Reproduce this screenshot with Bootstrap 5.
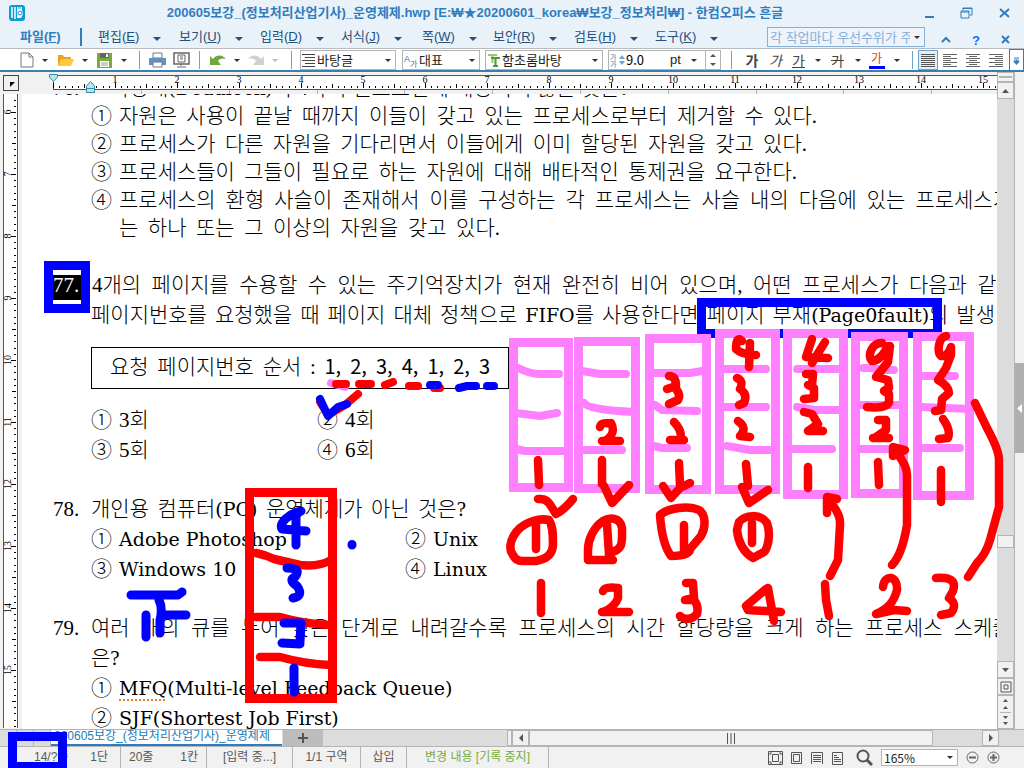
<!DOCTYPE html>
<html lang="ko">
<head>
<meta charset="utf-8">
<meta name="viewport" content="width=device-width, initial-scale=1">
<title>200605보강_(정보처리산업기사)_운영제제.hwp - 한컴오피스 흔글</title>
<link rel="stylesheet" href="https://cdn.jsdelivr.net/npm/bootstrap@5.3.0/dist/css/bootstrap.min.css">
<style>
:root{--blue:#2f7dc0;--line:#b4b4b4;--face:#f1f1f1;--track:#dcdcdc;--ink:#595959}
body{font-family:"Liberation Sans","Noto Sans CJK KR",sans-serif;font-size:13px;line-height:16px;color:#222;background:#eaf2f9;overflow:hidden}
button{border:0;background:none;padding:0;color:inherit;line-height:inherit}
svg{display:block;flex:none}
.caret{display:inline-block;border:4px solid transparent;border-top-color:#24507c;border-bottom:0}
.caret.dk{border-width:3px;border-bottom:0;border-top-color:#333}
.caret.lt{border-width:3px;border-bottom:0;border-top-color:#bbb}
.titlebar{height:25px}
.apptitle{font-size:13px;font-weight:700;color:var(--blue)}
.menubar{height:23px;color:#24507c}
.menubar button{width:81px;flex:none;text-align:left}
.menubar .filebtn{width:60px;color:var(--blue);font-weight:700}
.menubar .slim{width:71px}
.menubar .caret{margin-left:10px}
.filesep{width:2px;height:18px;background:var(--blue);margin-right:16px;flex:none}
.picker{appearance:none;border:1px solid var(--line);border-radius:0;background:#fff;color:#222;font:13px/16px "Noto Sans CJK KR",sans-serif;padding:0 14px 0 16px;height:20px;width:100%}
.pickwrap{position:relative}
.pickwrap>svg{position:absolute;left:2px;top:3px}
.pickwrap>.caret{position:absolute;right:5px;top:9px}
.quick{width:158px;margin-right:15px;flex:none}
.quick .picker{border:1px solid #84b1da;background:#eef4fa;color:#84b1da;padding-left:2px}
.tools{display:grid;grid-template-columns:20px 16px 24px 16px 23px 16px 14px 23px 24px 12px 24px 15px 24px 14px 18px 96px 6px 78px 5px 118px 5px 98px 15px 20px 22px 25px 21px 18px 21px 19px 20px 20px 11px 20px 23px 23px 23px 1fr 15px;padding-left:17px;height:24px;background:#fff;border-top:1px solid #b8bcc0;border-bottom:2px solid #3a7fae;align-items:center}
.tools>*{justify-self:center}
.tools>.wide{justify-self:stretch}
.vsep{width:1px;height:18px;background:#6fa3cf}
.ga{font:14px/18px "Noto Sans CJK KR",sans-serif;color:#444}
.sizebox{border:1px solid var(--line);height:20px}
.sizebox input{border:0;width:44px;padding:0;font:13px/16px "Noto Sans CJK KR",sans-serif}
.on{background:#e3eef8;border:1px solid #6fa3cf;width:20px;height:20px;display:grid;place-items:center}
.expander{border:1px solid var(--blue);border-bottom:0;height:22px;width:15px}
.rulerrow{height:22px;background:var(--face)}
.tabsel{width:16px;height:16px;border:1px solid #444;margin:3px 3px 0 3px}
.vruler{width:22px;background:var(--face);flex:none}
.paper{background:#fff;color:#000;padding-left:31px;font:300 21px/30px "Liberation Serif","Noto Sans CJK KR",serif;white-space:nowrap;overflow:hidden}
.first{margin-top:-20px;line-height:28px}
.quest{margin-bottom:29px}
.first.quest{margin-bottom:28px}
.qn{width:38px;flex:none}
.on77{background:#000;color:#fff;width:28px;margin:5px 11px 0 0;height:25px;line-height:20px}
.body1{padding-left:38px}
.mk{width:28px;flex:none}
.la{font-family:"DejaVu Serif",serif;font-size:19px;line-height:1}
.seq{font-family:"Noto Sans CJK KR",sans-serif;font-size:20px;font-weight:400;line-height:1}
.just{text-align:justify;text-align-last:justify;flex:none}
.j375{width:375px}.j381{width:381px}.j678{width:678px}.j688{width:688px}.j698{width:698px}.j893{width:893px}.j904{width:904px}.j940{width:940px}.j538{width:538px}
.given{border:1px solid #000;width:418px;height:42px;line-height:38px;margin:17px 0 16px;padding-left:18px;display:flex}
.given .just{width:380px}
.half{width:226px}.half2{width:314px}
.spell{text-decoration:underline dotted #e07b2a 2px;text-underline-offset:4px}
.vscroll{width:17px;background:var(--track);flex:none}
.sbtn{background:var(--face);border:1px solid var(--line);display:grid;place-items:center;flex:none}
.knob{height:17px}.midknob{height:13px;margin-top:436px}
.splitter{height:10px}.pager{height:34px}
.dock{width:10px;background:var(--face);border-left:1px solid var(--line);flex:none}
.dockgrip{height:90px;background:#b0b0b0;margin-top:291px;display:grid;place-items:center}
.tabrow{height:17px;background:var(--track);border-top:1px solid var(--line)}
.doctab{width:231px;flex:none;background:#fff;border-bottom:2px solid var(--blue);color:#1d7db8;line-height:12px;font-size:12px;overflow:hidden;white-space:nowrap;padding-left:3px;text-decoration:none;display:block}
.nib{width:17px;flex:none;border-right:1px solid var(--line);height:100%}
.addtab{width:40px;flex:none;background:#bcbcbc;display:grid;place-items:center;margin-left:1px}
.side{width:17px}.hthumb{width:404px}.hrest{width:49px}.hsplit{width:5px}
.status{height:22px;background:var(--face);border-top:1px solid var(--line);color:var(--ink);font-size:12px;line-height:20px}
.cell{border-right:1px solid var(--line);white-space:nowrap;height:100%;text-align:center}
.c1{width:121px;padding:0 12px 0 34px}.c2{width:86px}.c3{width:68px}.c4{width:46px}.c5{width:142px;color:#76ac3b}
.zoombox{width:77px}
.zoombox .picker{height:17px;padding-left:2px;font-size:12px;line-height:14px}
.zoombox>.caret{top:7px}
.ink{position:absolute;left:0;top:0;pointer-events:none;fill:none;stroke-width:9;stroke-linecap:round;stroke-linejoin:round}
.tick{font:10px "Liberation Serif",serif;fill:#000;text-anchor:middle}
</style>
</head>
<body>
<div class="vh-100 d-flex flex-column position-relative overflow-hidden">
  <header>
    <div class="titlebar d-flex align-items-center">
      <svg class="ms-2" width="18" height="18" viewBox="0 0 18 18"><rect x="1" y="1" width="16" height="16" rx="3" fill="#0d9bd7"/><path d="M4 3v11M7 3v12" stroke="#fff" stroke-width="1.5"/><path d="M9 3h5v3l1 4-2 4H9z" fill="#fff"/><circle cx="12" cy="9" r="2" fill="none" stroke="#0d9bd7"/><path d="M10 4h3" stroke="#0d9bd7"/></svg>
      <div class="apptitle flex-fill text-center">200605보강_(정보처리산업기사)_운영제제.hwp [E:₩★20200601_korea₩보강_정보처리₩] - 한컴오피스 흔글</div>
      <div class="d-flex gap-4 pe-2 me-1">
        <button aria-label="최소화"><svg width="12" height="14"><path d="M1 11h9" stroke="#2f7dc0" stroke-width="2"/></svg></button>
        <button aria-label="이전 크기로"><svg width="14" height="14" fill="none" stroke="#2f7dc0"><path d="M3 4V2h9v7h-2M3 2.500h9"/><path d="M1 5h8v7H1zM1 6h8"/></svg></button>
        <button aria-label="닫기"><svg width="14" height="14"><path d="M2 3l9 8M11 3l-9 8" stroke="#2f7dc0" stroke-width="2"/></svg></button>
      </div>
    </div>
    <nav class="menubar d-flex align-items-center">
      <button class="filebtn ms-3 ps-1">파일(<u>F</u>)</button>
      <span class="filesep ms-1"></span>
      <button>편집(<u>E</u>) <i class="caret"></i></button>
      <button>보기(<u>U</u>) <i class="caret"></i></button>
      <button>입력(<u>D</u>) <i class="caret"></i></button>
      <button>서식(<u>J</u>) <i class="caret"></i></button>
      <button class="slim">쪽(<u>W</u>) <i class="caret"></i></button>
      <button>보안(<u>R</u>) <i class="caret"></i></button>
      <button>검토(<u>H</u>) <i class="caret"></i></button>
      <button>도구(<u>K</u>) <i class="caret"></i></button>
      <div class="pickwrap quick ms-auto"><select class="picker" aria-label="찾을 기능"><option>각 작업마다 우선수위가 주</option></select><i class="caret dk"></i></div>
      <div class="d-flex gap-3 pe-2 me-1 pt-2">
        <svg width="12" height="12"><path d="M2 8l4-4 4 4" fill="none" stroke="#2f7dc0" stroke-width="2"/></svg>
        <b class="text-primary lh-1 px-1">?</b>
        <svg width="12" height="12"><path d="M2 2l7 7M9 2L2 9" stroke="#2f7dc0" stroke-width="2"/></svg>
      </div>
    </nav>
    <div class="tools" role="toolbar">
      <button aria-label="새 문서"><svg width="14" height="16"><path d="M1 1h8l4 4v10H1zM9 1v4h4" fill="#fff" stroke="#777"/></svg></button><i class="caret dk"></i>
      <button aria-label="불러오기"><svg width="17" height="14"><path d="M1 13V2h5l1 2h7v3" fill="#f0a020"/><path d="M1 13L4 6h13l-3 7z" fill="#ffc93c"/></svg></button><i class="caret dk"></i>
      <button aria-label="저장하기"><svg width="15" height="15"><path d="M0 0h15v15H0z" fill="#76ac3b"/><path d="M3 0h9v5H3z" fill="#666"/><path d="M9 1h2v3H9zM3 8h9v6H3z" fill="#fff"/><path d="M4 10h7M4 12h7" stroke="#999"/></svg></button><i class="caret dk"></i>
      <span class="vsep"></span>
      <button aria-label="인쇄"><svg width="17" height="16"><path d="M4 1h9v5H4z" fill="#fff" stroke="#777"/><path d="M0 6h17v7H0z" fill="#5e93c9"/><path d="M4 10h9v5H4z" fill="#fff" stroke="#777"/></svg></button>
      <button aria-label="미리 보기"><svg width="17" height="16" fill="none" stroke="#666"><path d="M1 1h15v11H1z" stroke-width="1.500"/><path d="M5 3h7v7H5zM7 5h3M7 7h3M4 15h9M8 12v2"/></svg></button>
      <span class="vsep"></span>
      <button aria-label="되돌리기"><svg width="17" height="13"><path d="M1 2l3 3c4-5 10-4 13 0-4-1-7 0-8 2l3 4H1z" fill="#70a83a"/></svg></button><i class="caret dk"></i>
      <button aria-label="다시 실행"><svg width="17" height="13"><path d="M16 2l-3 3C9 0 3 1 0 5c4-1 7 0 8 2l-3 4h11z" fill="#d0d0d0"/></svg></button><i class="caret lt"></i>
      <span class="vsep"></span>
      <div class="pickwrap wide"><svg width="14" height="14" stroke="#444"><path d="M0 1.500h13M3 4.500h10M0 7.500h13M3 10.500h10M0 13.500h13"/></svg><select class="picker" aria-label="스타일"><option>바탕글</option></select><i class="caret dk"></i></div><i></i>
      <div class="pickwrap wide"><svg width="14" height="15"><text x="0" y="9" font-size="9" fill="#2f7dc0">A</text><text x="6" y="14" font-size="8" fill="#2f7dc0">가</text></svg><select class="picker" aria-label="언어"><option>대표</option></select><i class="caret dk"></i></div><i></i>
      <div class="pickwrap wide"><svg width="14" height="14"><path d="M1 2h9M5.500 2v8" stroke="#9cc47a" stroke-width="2"/><path d="M4 5h9M8.500 5v8M6 13h5" stroke="#4f9a2c" stroke-width="2"/></svg><select class="picker" aria-label="글꼴"><option>함초롬바탕</option></select><i class="caret dk"></i></div><i></i>
      <div class="sizebox wide d-flex align-items-center"><svg width="17" height="16"><text x="1" y="8" font-size="7" fill="#2f7dc0">가</text><text x="1" y="15" font-size="7" fill="#2f7dc0">가</text><path d="M13 3l3 4h-6zM13 13l3-4h-6z" fill="#6aa5da"/></svg><input value="9.0" aria-label="글자 크기"><span>pt</span><i class="caret dk ms-auto me-2"></i></div>
      <button class="sizebox wide border-start-0 d-flex flex-column align-items-center justify-content-around" aria-label="크기 조절"><svg width="6" height="4"><path d="M0 3l3-3 3 3z" fill="#555"/></svg><svg width="6" height="4"><path d="M0 0l3 3 3-3z" fill="#555"/></svg></button>
      <span class="vsep"></span>
      <button class="ga fw-bold">가</button><button class="ga fst-italic">가</button><button class="ga text-decoration-underline">가</button><i class="caret dk"></i><button class="ga text-decoration-line-through">가</button><i class="caret dk"></i>
      <button aria-label="글자 색"><svg width="16" height="18"><text x="2" y="12" font-size="12" fill="#e0401c">가</text><path d="M0 15h16v3H0z" fill="#00f"/></svg></button><i class="caret dk"></i>
      <span class="vsep"></span>
      <button class="on" aria-label="양쪽 정렬"><svg width="14" height="14" stroke="#555"><path d="M0 1.500h14M0 3.500h14M0 5.500h14M0 7.500h14M0 9.500h14M0 11.500h14M0 13.500h14"/></svg></button>
      <button aria-label="왼쪽 정렬"><svg width="14" height="14" stroke="#666"><path d="M0 1.500h14M0 3.500h8M0 5.500h14M0 7.500h8M0 9.500h14M0 11.500h8M0 13.500h14"/></svg></button>
      <button aria-label="가운데 정렬"><svg width="14" height="14" stroke="#666"><path d="M0 1.500h14M3 3.500h8M0 5.500h14M3 7.500h8M0 9.500h14M3 11.500h8M0 13.500h14"/></svg></button>
      <button aria-label="오른쪽 정렬"><svg width="14" height="14" stroke="#666"><path d="M0 1.500h14M6 3.500h8M0 5.500h14M6 7.500h8M0 9.500h14M6 11.500h8M0 13.500h14"/></svg></button>
      <i></i>
      <button class="expander d-grid" aria-label="더 보기"><svg class="m-auto" width="7" height="8"><path d="M1 1h5M1 3h5M3.500 3v4" stroke="#2f7dc0"/><path d="M0 4h7L3.500 8z" fill="#2f7dc0"/></svg></button>
    </div>
  </header>

  <div class="d-flex flex-fill overflow-hidden">
    <div class="d-flex flex-column flex-fill overflow-hidden">
      <div class="rulerrow d-flex">
        <button class="tabsel" aria-label="탭 종류"><svg width="14" height="14"><path d="M6 6h5l-5 5z" fill="#000"/></svg></button>
        <svg id="hr" class="flex-fill" height="22"></svg>
      </div>
      <div class="d-flex flex-fill overflow-hidden">
        <div class="vruler"><svg id="vr" width="22" height="634"></svg></div>
        <main class="paper flex-fill">
          <div class="first quest">
            <div class="d-flex"><span class="qn">76.</span><span class="just j538">교착상태<span class="la">(Deadlock)</span>의 4가지 필요조건에 해당되지 않는 것은?</span></div>
            <div class="body1">
              <div class="d-flex"><span class="mk">①</span><span class="just j698">자원은 사용이 끝날 때까지 이들이 갖고 있는 프로세스로부터 제거할 수 있다.</span></div>
              <div class="d-flex"><span class="mk">②</span><span class="just j688">프로세스가 다른 자원을 기다리면서 이들에게 이미 할당된 자원을 갖고 있다.</span></div>
              <div class="d-flex"><span class="mk">③</span><span class="just j678">프로세스들이 그들이 필요로 하는 자원에 대해 배타적인 통제권을 요구한다.</span></div>
              <div class="d-flex"><span class="mk">④</span><span class="just j893">프로세스의 환형 사슬이 존재해서 이를 구성하는 각 프로세스는 사슬 내의 다음에 있는 프로세스가</span></div>
              <div class="d-flex"><span class="mk"></span><span class="just j381">는 하나 또는 그 이상의 자원을 갖고 있다.</span></div>
            </div>
          </div>
          <div class="quest">
            <div class="d-flex"><span class="qn on77">77.</span><span class="just j940 pe-3">4개의 페이지를 수용할 수 있는 주기억장치가 현재 완전히 비어 있으며, 어떤 프로세스가 다음과 같은</span></div>
            <div class="body1">
              <div class="just j904">페이지번호를 요청했을 때 페이지 대체 정책으로 <span class="la">FIFO</span>를 사용한다면 페이지 부재<span class="la">(Page0fault)</span>의 발생</div>
              <div class="given"><div class="just">요청 페이지번호 순서 : <span class="seq">1, 2, 3, 4, 1, 2, 3</span></div></div>
              <div class="d-flex"><span class="half d-flex"><span class="mk">①</span>3회</span><span class="mk">②</span>4회</div>
              <div class="d-flex"><span class="half d-flex"><span class="mk">③</span>5회</span><span class="mk">④</span>6회</div>
            </div>
          </div>
          <div class="quest">
            <div class="d-flex"><span class="qn">78.</span><span class="just j375">개인용 컴퓨터<span class="la">(PC)</span> 운영체제가 아닌 것은?</span></div>
            <div class="body1">
              <div class="d-flex align-items-baseline"><span class="half2 d-flex align-items-baseline"><span class="mk">①</span><span class="la">Adobe Photoshop</span></span><span class="mk">②</span><span class="la">Unix</span></div>
              <div class="d-flex align-items-baseline"><span class="half2 d-flex align-items-baseline"><span class="mk">③</span><span class="la">Windows 10</span></span><span class="mk">④</span><span class="la">Linux</span></div>
            </div>
          </div>
          <div>
            <div class="d-flex"><span class="qn">79.</span><span class="just j940">여러 개의 큐를 두어 낮은 단계로 내려갈수록 프로세스의 시간 할당량을 크게 하는 프로세스 스케줄링</span></div>
            <div class="body1">
              <div>은?</div>
              <div class="d-flex align-items-baseline"><span class="mk">①</span><span class="la"><span class="spell">MFQ</span>(Multi-level Feedback Queue)</span></div>
              <div class="d-flex align-items-baseline"><span class="mk">②</span><span class="la"><span class="spell">SJF</span>(Shortest Job First)</span></div>
            </div>
          </div>
        </main>
      </div>
    </div>
    <div class="vscroll d-flex flex-column">
      <div class="sbtn splitter"><svg width="13" height="4"><path d="M0 2h13" stroke="#b4b4b4" stroke-width="2"/></svg></div>
      <button class="sbtn knob" aria-label="위로"><svg width="7" height="4"><path d="M0 4l3.500-4L7 4z" fill="#555"/></svg></button>
      <div class="sbtn midknob mb-auto"></div>
      <button class="sbtn knob" aria-label="아래로"><svg width="7" height="4"><path d="M0 0l3.500 4L7 0z" fill="#555"/></svg></button>
      <button class="sbtn knob" aria-label="찾아가기"><svg width="12" height="12" fill="none" stroke="#555"><path d="M1 1h10v10H1zM4 4h4v4H4z"/></svg></button>
      <div class="sbtn pager"><svg width="11" height="28" fill="#555"><path d="M3 4l2.500-3L8 4zM3 11l2.500-3L8 11zM3 18l2.500 3L8 18zM3 24l2.500 3L8 24z"/><path d="M0 14h11v1H0z" fill="#b4b4b4"/></svg></div>
    </div>
    <div class="dock"><div class="dockgrip"><svg width="5" height="9"><path d="M5 0v9L0 4.500z" fill="#fff"/></svg></div></div>
  </div>

  <div class="tabrow d-flex">
    <span class="nib"></span><span class="nib"></span><span class="nib"></span>
    <a href="#" class="doctab">200605보강_(정보처리산업기사)_운영제제</a>
    <button class="addtab" aria-label="새 탭"><svg width="10" height="10"><path d="M5 0v10M0 5h10" stroke="#555" stroke-width="2"/></svg></button>
    <div class="flex-fill"></div>
    <div class="sbtn hsplit"></div>
    <button class="sbtn side" aria-label="왼쪽으로"><svg width="4" height="8"><path d="M4 0v8L0 4z" fill="#555"/></svg></button>
    <div class="sbtn hthumb"><svg width="8" height="11"><path d="M.5 0v11M4 0v11M7.500 0v11" stroke="#555"/></svg></div>
    <div class="hrest"></div>
    <button class="sbtn side" aria-label="오른쪽으로"><svg width="4" height="8"><path d="M0 0v8l4-4z" fill="#555"/></svg></button>
    <div class="side me-2"></div>
  </div>
  <footer class="status d-flex align-items-center">
    <div class="cell c1 d-flex justify-content-between"><span>14/?쪽</span><span>1단</span></div>
    <div class="cell c2 d-flex justify-content-between px-2"><span>20줄</span><span>1칸</span></div>
    <div class="cell c2">[입력 중...]</div>
    <div class="cell c3">1/1 구역</div>
    <div class="cell c4">삽입</div>
    <div class="cell c5 me-auto">변경 내용 [기록 중지]</div>
    <div class="d-flex align-items-center gap-2 pe-4">
      <svg width="15" height="14" fill="none" stroke="#555"><path d="M.5.5h14v13H.5zM4.500 3.500h6v7h-6zM2 4V2h2M11 2h2v2M2 10v2h2M11 12h2v-2"/></svg>
      <svg width="12" height="14" fill="none" stroke="#555"><path d="M.5 1.500h10v11H.5zM2.500 3.500h6v7h-6z"/></svg>
      <svg width="13" height="14" fill="none" stroke="#555"><path d="M.5 13V1.500h11V13M2 4.500h8M2 6.500h8M2 8.500h8M2 10.500h8"/></svg>
      <svg width="12" height="14" fill="none" stroke="#555"><path d="M.5 1.500h10v12H.5zM2 4.500h3M2 6.500h5M2 8.500h7M2 10.500h7"/></svg>
      <svg class="ms-1" width="17" height="17" fill="none" stroke="#555"><circle cx="7" cy="7" r="5.500" stroke-width="2"/><path d="M11 11l5 5" stroke-width="3"/></svg>
      <div class="pickwrap zoombox"><select class="picker d-block" aria-label="확대 비율"><option>165%</option></select><i class="caret dk"></i></div>
      <button aria-label="축소"><svg width="13" height="13" fill="none" stroke="#666"><circle cx="6.500" cy="6.500" r="5.500"/><path d="M3 6.500h7" stroke-width="2"/></svg></button>
      <button aria-label="확대"><svg width="13" height="13" fill="none" stroke="#666"><circle cx="6.500" cy="6.500" r="5.500"/><path d="M3 6.500h7M6.500 3v7" stroke-width="2"/></svg></button>
    </div>
  </footer>

  <!-- pen annotations drawn over the document -->
  <svg class="ink" width="1024" height="768" viewBox="0 0 1024 768">
    <g stroke="#00f" stroke-linejoin="miter">
      <rect x="48.500" y="265.500" width="37" height="43"/><rect x="701.500" y="302.500" width="236" height="31"/><rect x="12.500" y="736.500" width="50" height="30"/>
    </g>
    <g stroke="#ff80ff">
      <g stroke-linejoin="miter"><rect x="513.500" y="342.500" width="55" height="145"/><rect x="578.500" y="341.500" width="57" height="147"/><rect x="649.500" y="338.500" width="57" height="151"/><rect x="719.500" y="333.500" width="56" height="156"/><rect x="787.500" y="333.500" width="56" height="161"/><rect x="855.500" y="336.500" width="48" height="157"/><rect x="917.500" y="336.500" width="52" height="159"/></g>
      <path stroke-width="8" d="M518 368Q530 374 540 374H559M516 413L540 416 557 413M516 449L525 451H568M582 371L600 374H626M584 403Q588 410 635 412M582 450H622M654 373H690L702 371M655 405L662 410 697 411M654 446L662 448H687M724 369H766M720 407H766M727 446L750 450H775M797 369H843M797 407L815 410H843M787 449H832M863 368L870 368 885 370H894M860 405H900M860 449H900M922 376H955M922 407L970 409M917 448H960M331 383L345 387"/>
    </g>
    <g stroke="#f00" stroke-width="8.500">
      <rect x="249.500" y="492.500" width="83" height="206" stroke-linejoin="miter" stroke-width="9"/>
      <path stroke-width="8" d="M336 384H346M359 384H371M385 385L393 382M409 386H418M434 388H440M358 394L345 405 328 415 320 402"/>
      <path d="M256 553Q266 555 274 559L300 565Q320 567 331 560M256 617H280Q305 624 330 625M260 657H280Q305 664 330 665"/>
      <path d="M538 460L539 485M538 499Q547 498 551 506L556 514Q564 510 573 499M549 520C540 518 526 521 517 531 509 541 509 550 513 555Q516 561 522 561H536Q553 558 553 544C553 535 553 526 549 520M536 524V549M541 583V613"/>
      <path d="M600 427C601 421 607 424 611 423 615 430 612 437 605 441M602 441H620M602 460V484M604 486L612 503 629 485M603 521C593 528 588 540 588 550V560H613M609 553C624 550 622 542 622 528 620 517 610 517 603 521M607 524L609 555M603 591Q605 586 618 588V598Q615 607 603 612M602 612H629"/>
      <path d="M669 376Q676 376 676 386L667 389M676 389Q681 395 678 400L669 404M674 422C679 427 681 433 681 437M670 440H684M679 463L680 485M663 486L671 498 680 488 690 483M660 515C668 508 688 505 699 510 706 515 706 527 701 536L690 549Q690 556 671 556C663 545 661 530 660 515M684 525V552M686 583H693L694 598 685 600H694Q699 606 697 614C692 620 684 620 680 616"/>
      <path d="M742 341Q736 335 736 349 742 355 756 355M750 343L749 367M737 378Q744 381 740 389 748 394 744 403L739 405M738 421Q748 428 740 436L750 437M746 464L748 486M742 487L749 503 768 490M739 522C745 515 760 513 767 523 771 534 768 548 764 552L753 558C742 551 738 541 737 530ZM752 523V543M766 589L746 606 748 610 781 612M768 588L774 621"/>
      <path d="M812 339L806 357 828 358M825 342L812 363M806 374H813L812 385 808 385 814 388V398L804 399M804 412L812 414 818 424 808 431H823M808 467V488M827 513V497L837 499M831 503Q841 515 840 525L838 560 830 576M825 584L826 600 829 616"/>
      <path d="M882 343C872 343 867 355 872 361 880 361 886 350 888 346M890 346L888 362 876 377 888 380 889 388 884 391 889 394V402Q887 409 867 407M878 420L886 420 886 430 876 437M873 438H889M878 462L879 485M893 456V447L905 450ZM896 452Q907 465 907 475V525Q902 555 892 565M883 587C884 574 898 575 897 590 894 602 888 609 876 614L894 610 907 611"/>
      <path d="M946 336C938 338 937 352 941 356Q948 357 951 347V355L946 368 938 380Q949 386 949 393L942 399 941 410 935 411M943 419Q951 430 948 438L939 439M941 470V502M936 578Q958 576 953 591L949 598Q958 604 951 613L941 615"/>
      <path d="M975 403L987 428Q999 450 999 460V507L990 540Q986 554 977 563L968 577"/>
    </g>
    <g stroke="#00f">
      <path stroke-width="8" d="M320 399L328 416 338 407 347 404M430 385H438M459 388L467 386H476M487 386H494"/>
      <path d="M301 511C288 514 279 523 282 529L306 531M296 513V545M287 568Q302 568 295 577 288 580 297 586 304 596 293 598M284 623H301L300 642M282 643L300 644M294 668V692M131 595H178L182 592M159 600Q163 608 160 620V633M163 615H186M146 615V637M352 544.500V545"/>
    </g>
  </svg>
</div>
<script>
// ruler scales: one unit is 62px, with ten small steps in each
(function(){
  var hr=document.getElementById('hr'),w=hr.getBoundingClientRect().width,hgt=634;
  var h='<path d="M31 3H2000V17H31Z" fill="#fff"/><path d="M31 3.500H2000M31 17.500H2000M31.500 3V17" stroke="#555"/>',d='',t='';
  for(var i=0;31+i*6.2<w;i++){var x=Math.round(31+i*6.2)+.5;d+='M'+x+' '+(i%10==0?11:i%5==0?12:14)+'V16';}
  for(i=1;40+i*62<w;i++)t+='<text class="tick" x="'+(31+i*62)+'" y="11">'+i+'</text>';
  h+='<path d="'+d+'" stroke="#000"/>'+t;
  d='';for(i=0;119+i*88<w;i++)d+='M'+(Math.round(119+i*87.8))+'.500 18V22';
  h+='<path d="'+d+'" stroke="#b4b4b4"/><path d="M27.500 2.500H35.500V5L31.500 9.500 27.500 5Z" fill="#b9e6ef" stroke="#3a8ba8"/><path d="M64.500 20.500V14L68.500 9.500 72.500 14V20.500ZM64.500 16.500H72.500" fill="#b9e6ef" stroke="#3a8ba8"/>';
  hr.innerHTML=h;
  h='<path d="M3 0H17V634H3Z" fill="#fff"/>';d='';t='';
  for(i=-2;18+i*6.2<hgt;i++){var y=Math.round(18+i*6.2)+.5;d+='M'+(i%10==0?11:i%5==0?12:14)+' '+y+'H16';}
  for(i=0;i<10;i++){var c=18+i*62;t+='<text class="tick" x="0" y="0" transform="translate(11 '+c+') rotate(-90)">'+(i+6)+'</text>';}
  h+='<path d="'+d+'" stroke="#000"/><path d="M3.500 0V634M17.500 0V634" stroke="#555"/>'+t;
  document.getElementById('vr').innerHTML=h;
})();
</script>
<script src="https://cdn.jsdelivr.net/npm/bootstrap@5.3.0/dist/js/bootstrap.bundle.min.js"></script>
</body>
</html>
